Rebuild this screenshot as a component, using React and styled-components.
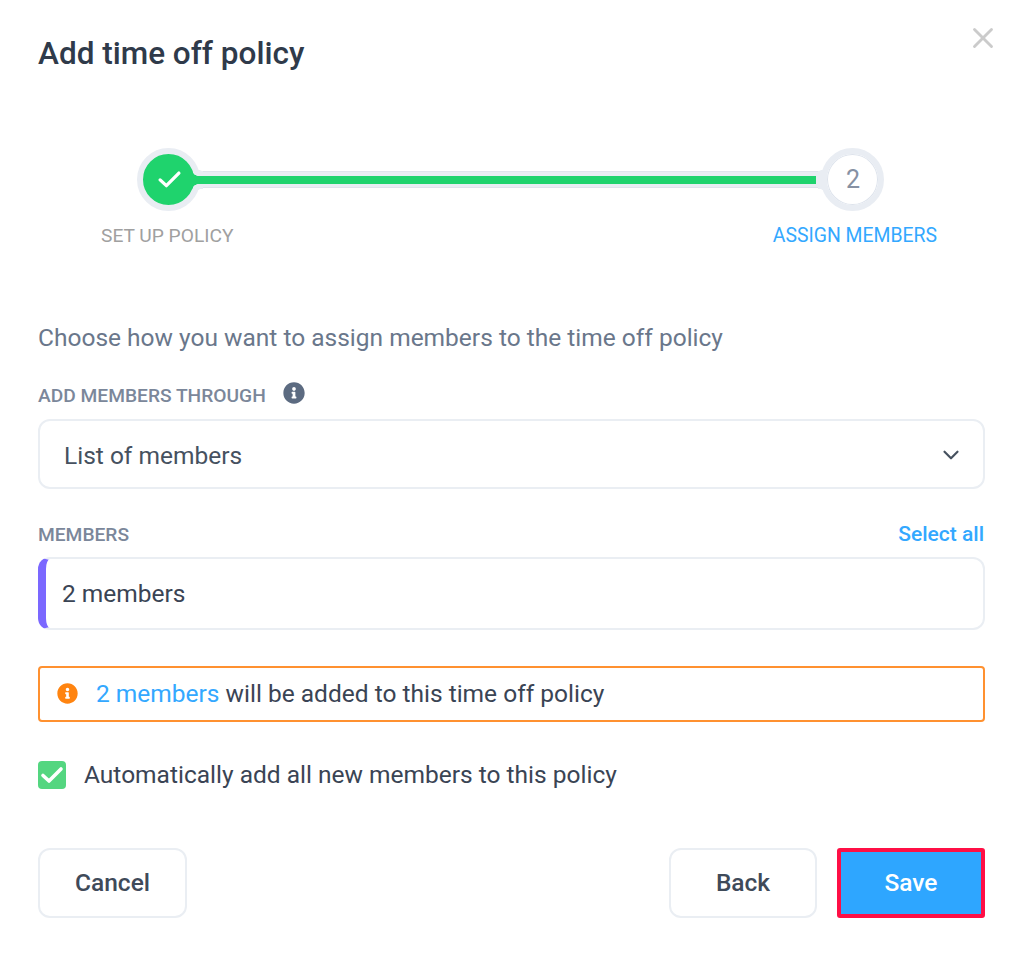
import React from 'react';
import styled, { createGlobalStyle } from 'styled-components';
import { FaInfoCircle } from 'react-icons/fa';
import { FiChevronDown, FiX } from 'react-icons/fi';

const GlobalStyle = createGlobalStyle`
	html, body {
		margin: 0;
		padding: 0;
		background: #fff;
	}
	* {
		box-sizing: border-box;
	}
`;

const CheckMark = ({ size, weight }) => (
	<svg width={size} height={(size * 18) / 24} viewBox='0 0 24 18' fill='none'>
		<path
			d='M3 9.5 L9 15 L21 3'
			stroke='#fff'
			strokeWidth={weight}
			strokeLinecap='round'
			strokeLinejoin='round'
		/>
	</svg>
);

const App = () => {
	return (
		<>
			<GlobalStyle />
			<Modal>
				<Header>
					<Title>Add time off policy</Title>
					<CloseButton>
						<FiX />
					</CloseButton>
				</Header>

				<Stepper>
					<StepCircle $done>
						<CheckMark size={25} weight={3.2} />
					</StepCircle>
					<Rail>
						<RailFill />
					</Rail>
					<StepCircle>2</StepCircle>
				</Stepper>
				<StepLabels>
					<StepLabel>SET UP POLICY</StepLabel>
					<StepLabel $active>ASSIGN MEMBERS</StepLabel>
				</StepLabels>

				<Intro>Choose how you want to assign members to the time off policy</Intro>

				<LabelRow>
					<FieldLabel>
						ADD MEMBERS THROUGH
						<InfoIcon />
					</FieldLabel>
				</LabelRow>
				<Select>
					List of members
					<FiChevronDown />
				</Select>

				<LabelRow $spaced>
					<FieldLabel>MEMBERS</FieldLabel>
					<SelectAll>Select all</SelectAll>
				</LabelRow>
				<MembersInput>2 members</MembersInput>

				<Alert>
					<AlertIcon />
					<span>
						<Link>2 members</Link> will be added to this time off policy
					</span>
				</Alert>

				<CheckRow>
					<Checkbox>
						<CheckMark size={24} weight={3.6} />
					</Checkbox>
					<CheckText>Automatically add all new members to this policy</CheckText>
				</CheckRow>

				<Footer>
					<Button $wide>Cancel</Button>
					<FooterRight>
						<Button>Back</Button>
						<Button $primary>Save</Button>
					</FooterRight>
				</Footer>
			</Modal>
		</>
	);
};

export default App;

// ########### styled components ###########
const Modal = styled.div`
	width: 1024px;
	height: 954px;
	padding: 0 39px 0 38px;
	background: #fff;
	font-family: Roboto, 'Liberation Sans', sans-serif;
	color: #3a4454;
	overflow: hidden;
`;

const Header = styled.div`
	display: flex;
	align-items: flex-start;
	justify-content: space-between;
	height: 148px;
	padding-top: 35px;
`;

const Title = styled.h1`
	margin: 0;
	font-size: 31.5px;
	line-height: 38px;
	font-weight: 500;
	color: #2f3a4a;
`;

const CloseButton = styled.div`
	display: flex;
	margin: -14px -15px 0 0;
	font-size: 34px;
	color: #cbcbcb;
`;

const Stepper = styled.div`
	display: flex;
	align-items: center;
	height: 63px;
	padding: 0 101px 0 99px;
`;

const StepCircle = styled.div`
	flex: none;
	position: relative;
	z-index: 1;
	width: 63px;
	height: 63px;
	display: flex;
	align-items: center;
	justify-content: center;
	padding-left: 1px;
	border-radius: 50%;
	border: 6px solid #e9edf3;
	background: ${(p) => (p.$done ? '#1fd36d' : '#fff')};
	color: #8691a3;
	font-size: 25px;
	box-shadow: ${(p) => (p.$done ? 'none' : 'inset 0 0 0 1px #dde3ec')};
`;

const Rail = styled.div`
	flex: 1;
	height: 17px;
	margin: 0 -6px;
	display: flex;
	align-items: center;
	background: #e9edf3;
	box-shadow: inset 0 1px 0 #dfe4ec, inset 0 -1px 0 #dfe4ec;
	position: relative;

	/* concave joins where the rail meets each circle */
	&::before,
	&::after {
		content: '';
		position: absolute;
		top: -10px;
		width: 10px;
		height: 37px;
		background-repeat: no-repeat;
		background-size: 100% 50%;
		background-position: top, bottom;
	}

	&::before {
		left: -1px;
		background-image: radial-gradient(circle 10px at 100% 0, transparent 9.5px, #e9edf3 10px),
			radial-gradient(circle 10px at 100% 100%, transparent 9.5px, #e9edf3 10px);
	}

	&::after {
		right: -1px;
		background-image: radial-gradient(circle 10px at 0 0, transparent 9.5px, #e9edf3 10px),
			radial-gradient(circle 10px at 0 100%, transparent 9.5px, #e9edf3 10px);
	}
`;

const RailFill = styled.div`
	flex: 1;
	height: 8px;
	margin-right: 11px;
	background: #1fd36d;
	position: relative;
	z-index: 2;

	&::before {
		content: '';
		position: absolute;
		left: -2px;
		top: -6px;
		width: 6px;
		height: 20px;
		background-repeat: no-repeat;
		background-size: 100% 50%;
		background-position: top, bottom;
		background-image: radial-gradient(circle 6px at 100% 0, transparent 5.5px, #1fd36d 6px),
			radial-gradient(circle 6px at 100% 100%, transparent 5.5px, #1fd36d 6px);
	}
`;

const StepLabels = styled.div`
	display: flex;
	justify-content: space-between;
	padding: 14px 48px 0 63px;
`;

const StepLabel = styled.div`
	font-size: ${(p) => (p.$active ? '19.4px' : '19.2px')};
	line-height: 22px;
	color: ${(p) => (p.$active ? '#33a8ff' : '#a0a0a0')};
`;

const Intro = styled.p`
	margin: 76px 0 0;
	font-size: 24.5px;
	line-height: 30px;
	color: #6a778b;
`;

const LabelRow = styled.div`
	display: flex;
	align-items: center;
	justify-content: space-between;
	height: 24px;
	margin-top: ${(p) => (p.$spaced ? '33px' : '30px')};
	margin-bottom: ${(p) => (p.$spaced ? '11px' : '12px')};
`;

const FieldLabel = styled.div`
	display: flex;
	align-items: center;
	font-size: 19.2px;
	font-weight: 500;
	color: #7b879a;
`;

const InfoIcon = styled(FaInfoCircle)`
	margin: -4px 0 0 17px;
	font-size: 22px;
	color: #5c6b81;
`;

const SelectAll = styled.div`
	margin: -1px 1px 0 0;
	font-size: 21px;
	font-weight: 500;
	color: #33a8ff;
`;

const Select = styled.div`
	display: flex;
	align-items: center;
	justify-content: space-between;
	height: 70px;
	padding: 2px 19px 0 24px;
	border: 2px solid #eaeef3;
	border-radius: 12px;
	font-size: 24.5px;
	color: #46515f;

	svg {
		font-size: 26px;
	}
`;

const MembersInput = styled.div`
	display: flex;
	align-items: center;
	height: 73px;
	padding-left: 16px;
	border: 2px solid #eaeef3;
	border-left: 8px solid #7b68ff;
	border-radius: 12px;
	font-size: 24.5px;
	color: #3a4454;
`;

const Alert = styled.div`
	display: flex;
	align-items: center;
	gap: 18px;
	height: 56px;
	margin-top: 36px;
	padding: 0 0 2px 17px;
	border: 2px solid #ff9130;
	border-radius: 4px;
	font-size: 24.5px;
	color: #3a4454;
`;

const AlertIcon = styled(FaInfoCircle)`
	flex: none;
	font-size: 21px;
	color: #ff8410;
`;

const Link = styled.span`
	color: #33a8ff;
`;

const CheckRow = styled.div`
	display: flex;
	align-items: center;
	gap: 18px;
	height: 28px;
	margin-top: 39px;
	font-size: 24.5px;
	color: #3a4454;
`;

const CheckText = styled.span`
	padding-bottom: 2px;
`;

const Checkbox = styled.div`
	flex: none;
	width: 28px;
	height: 28px;
	display: flex;
	align-items: center;
	justify-content: center;
	border-radius: 4px;
	background: #54d680;
`;

const Footer = styled.div`
	display: flex;
	justify-content: space-between;
	margin-top: 59px;
`;

const FooterRight = styled.div`
	display: flex;
	gap: 20px;
`;

const Button = styled.button`
	width: ${(p) => (p.$wide ? '149px' : '148px')};
	height: 70px;
	padding: 0 0 2px;
	border: ${(p) => (p.$primary ? '4px solid #ff0f45' : '2px solid #eaeef3')};
	border-radius: ${(p) => (p.$primary ? '3px' : '12px')};
	background: ${(p) => (p.$primary ? '#2ea6ff' : '#fff')};
	color: ${(p) => (p.$primary ? '#fff' : '#3f4a59')};
	font-family: inherit;
	font-size: 24.5px;
	font-weight: 500;
`;
// ########### styled components ###########
